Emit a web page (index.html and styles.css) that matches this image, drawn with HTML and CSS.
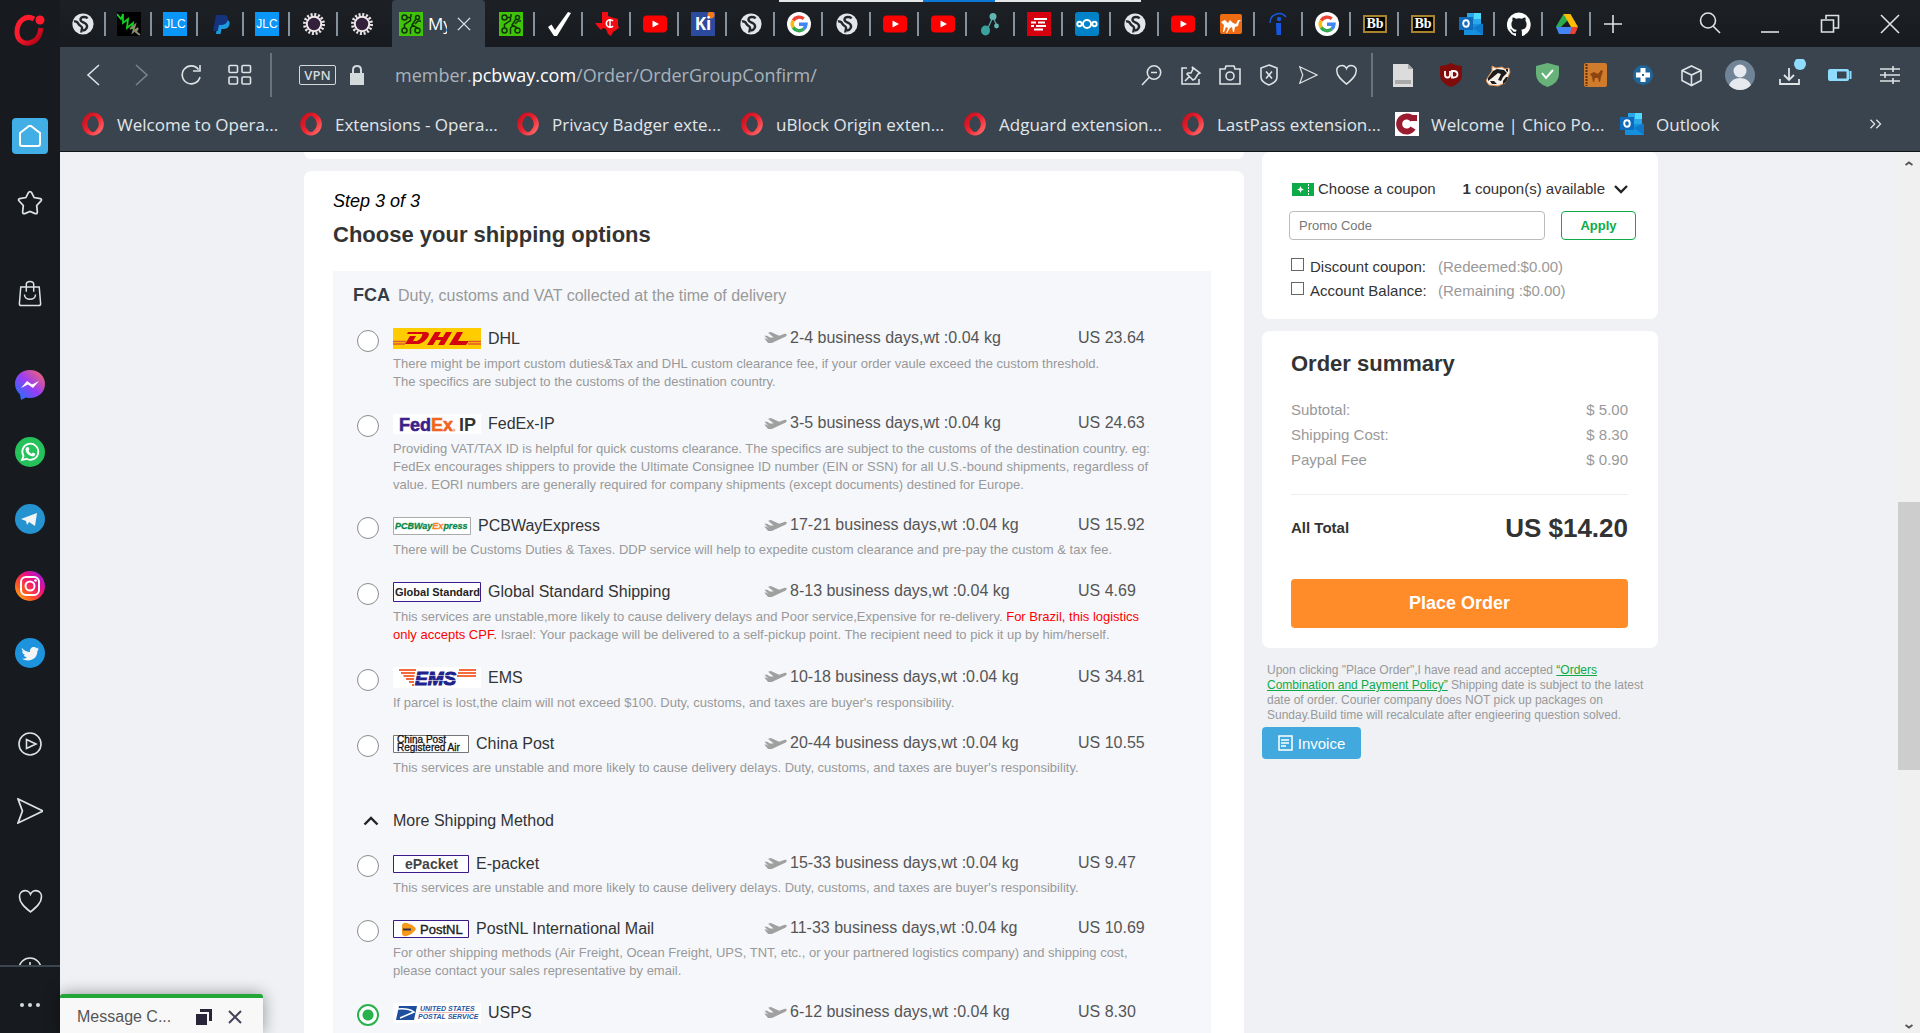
FILE: index.html
```html
<!DOCTYPE html>
<html lang="en">
<head>
<meta charset="utf-8">
<title>My Order</title>
<link rel="stylesheet" href="styles.css">
</head>
<body>
<svg class="sprite" width="0" height="0" aria-hidden="true">
  <defs>
    <linearGradient id="red-ring" x1="0" y1="0" x2="1" y2="1"><stop offset="0" stop-color="#c4101f"/><stop offset=".5" stop-color="#f0222f"/><stop offset="1" stop-color="#ff6a6a"/></linearGradient>
    <linearGradient id="logo-red" x1="0" y1="0" x2="1" y2="1"><stop offset=".4" stop-color="#ff1b2d"/><stop offset="1" stop-color="#a70014"/></linearGradient>
    <linearGradient id="msg-grad" x1="0" y1="1" x2="1" y2="0"><stop offset="0" stop-color="#0a7cff"/><stop offset=".5" stop-color="#9a3cf5"/><stop offset="1" stop-color="#ff6a5c"/></linearGradient>
    <linearGradient id="ig-grad" x1="0" y1="1" x2="1" y2="0"><stop offset="0" stop-color="#ffd21c"/><stop offset=".3" stop-color="#ff5a1f"/><stop offset=".6" stop-color="#f0127a"/><stop offset="1" stop-color="#8a1cff"/></linearGradient>
  </defs>
  <symbol id="globe" viewBox="0 0 24 24"><circle cx="12" cy="12" r="10.600" fill="#e3e6e8"/><path d="M16.500 6.500c-1-2-6.500-2.300-7 .8-.5 3 3.500 2.700 5.500 4.700 2.300 2.500.5 6-3 6.500M3 9.500c2-.5 3.500.5 4.500 2.500s3 1.500 3.500 3.500-1 3-.5 5" fill="none" stroke="#23272b" stroke-width="2.400"/></symbol>
  <symbol id="spice" viewBox="0 0 24 24"><path d="M0 0h24v24H0z"/><path d="M0 2l4 5 2-5 0 9 5-4-1 9 6-5-1 6" fill="none" stroke="#12d01f" stroke-width="1.800"/><path d="M13 17l5-4-2 7 5-4-2 4 4 3" fill="none" stroke="#8d8a72" stroke-width="1.800"/></symbol>
  <symbol id="paypal" viewBox="0 0 24 24"><path fill="#1c9ade" d="M9 8h8c3 0 4 2 3.500 4.500-.6 3-3 4.500-6 4.500h-2l-1 5H7z"/><path fill="#15337c" d="M7 3h7c4 0 5.500 2 4.800 5-.8 3.500-3.300 5-6.800 5h-2l-1.300 6H4z"/></symbol>
  <symbol id="gear" viewBox="0 0 24 24"><circle cx="12" cy="12" r="9.500" fill="none" stroke="#e9e3e6" stroke-width="3" stroke-dasharray="2 1.730"/><circle cx="12" cy="12" r="7.200" fill="#35203c" stroke="#efe9ec" stroke-width="2"/></symbol>
  <symbol id="pcb" viewBox="0 0 24 24"><path fill="#3fc40a" d="M0 0h24v24H0z"/><g fill="none" stroke="#12330a" stroke-width="1.500"><circle cx="5.500" cy="5.500" r="2.500"/><circle cx="5.500" cy="18.500" r="2.500"/><circle cx="18.500" cy="18.500" r="2.500"/><circle cx="18.500" cy="5.500" r="2"/><path d="M8 5.500h3.500l0 3-6 4v3.500M12 2v3M17 7l-4 6 5.500 3M11.500 22v-6l3-3M22 9h-3l-3 3"/></g></symbol>
  <symbol id="check" viewBox="0 0 24 24"><path fill="#fff" d="M1 15l3.500-2.500 3.500 5.500L21 0l3 1L10 24H7z"/></symbol>
  <symbol id="texas" viewBox="0 0 24 24"><path fill="#f30d12" d="M7 0h6v4l6 2 4 1v6l1 3-6 4-2 4-3-2-2-5-3-1-2 2-3-3-3-4h7z"/><path d="M18 9a3.800 3.800 0 1 0 0 5M15 7v9" fill="none" stroke="#fff" stroke-width="1.600"/></symbol>
  <symbol id="yt" viewBox="0 0 24 24"><rect y="3.500" width="24" height="17" rx="4" fill="#f00"/><path fill="#fff" d="M9.500 8.500v7l6.500-3.500z"/></symbol>
  <symbol id="google" viewBox="0 0 24 24"><circle cx="12" cy="12" r="12" fill="#fff"/><g fill="none" stroke-width="3.400"><path d="M6.200 8.500A7 7 0 0 1 16.700 6.800" stroke="#ea4335"/><path d="M6.200 8.500a7 7 0 0 0 0 7" stroke="#fbbc05"/><path d="M6.200 15.500a7 7 0 0 0 10.500 1.500" stroke="#34a853"/><path d="M12 12.200h7a7 7 0 0 1-2.300 4.800" stroke="#4285f4"/></g></symbol>
  <symbol id="nodes" viewBox="0 0 24 24"><g stroke="#5aa3a5" stroke-width="1.300"><path d="M14 5L8 18M14 5l4 9"/></g><circle cx="14" cy="4.500" r="3.500" fill="#62b5b3"/><ellipse cx="6.500" cy="18.500" rx="4.500" ry="5" fill="#3aa19e"/><circle cx="17.500" cy="14" r="2.400" fill="#62b5b3"/></symbol>
  <symbol id="lines" viewBox="0 0 24 24"><path fill="#d4000f" d="M0 0h24v24H0z"/><path d="M7 7h13M4 10.500h5m2 0h7M9 14h10M4 14h3M7 17.500h9" stroke="#fff" stroke-width="1.900"/></symbol>
  <symbol id="cloud" viewBox="0 0 24 24"><rect width="24" height="24" rx="3" fill="#0082c9"/><g fill="none" stroke="#fff" stroke-width="1.900"><circle cx="12" cy="12" r="4"/><circle cx="4.500" cy="12" r="2.200"/><circle cx="19.500" cy="12" r="2.200"/></g></symbol>
  <symbol id="camel" viewBox="0 0 24 24"><rect x="1" y="2" width="22" height="20" rx="2" fill="#ef6c13"/><path fill="#fff" d="M2 10l4-2 3 3 2-3 3 3 3 1 2-4h3l-2 2-1 4-3 1-1 5h-1l-1-5-2 1-3 5H7l2-5-2-1-2 5H4l1-7z"/></symbol>
  <symbol id="info" viewBox="0 0 24 24"><path d="M3 11a9 9 0 0 1 16-6" fill="none" stroke="#1657e0" stroke-width="1.500"/><circle cx="12" cy="7" r="2.200" fill="#1657e0"/><path d="M9 11h5v12H9.500" fill="#1657e0"/></symbol>
  <symbol id="outlook" viewBox="0 0 24 24"><path fill="#28a8ea" d="M8 1h14v12H8z"/><path fill="#50d9ff" d="M15 1h7v6h-7z"/><path fill="#1490df" d="M5 12h19v11H5z"/><path fill="#0a5fb4" d="M14 16l10-5v12z" opacity=".5"/><rect y="5" width="14" height="13" fill="#0f6cbd"/><ellipse cx="7" cy="11.500" rx="2.800" ry="3.300" fill="none" stroke="#fff" stroke-width="1.900"/></symbol>
  <symbol id="github" viewBox="0 0 24 24"><path fill="#fff" d="M12 .6a12 12 0 0 0-3.800 23.400c.6.1.8-.3.8-.6v-2.200c-3.300.7-4-1.500-4-1.500-.6-1.400-1.400-1.800-1.400-1.800-1-.7.1-.7.1-.7 1.200.1 1.900 1.200 1.900 1.200 1 1.900 2.800 1.300 3.500 1 .1-.8.400-1.300.8-1.600-2.700-.3-5.500-1.300-5.500-5.900 0-1.300.5-2.400 1.200-3.200-.1-.4-.5-1.600.1-3.200 0 0 1-.3 3.300 1.200a11.500 11.500 0 0 1 6 0c2.300-1.500 3.300-1.200 3.300-1.200.7 1.600.2 2.800.1 3.200.8.800 1.200 1.900 1.200 3.200 0 4.600-2.800 5.600-5.500 5.900.4.400.8 1.100.8 2.200v3.300c0 .3.200.7.800.6A12 12 0 0 0 12 .6z"/></symbol>
  <symbol id="drive" viewBox="0 0 24 24"><path fill="#2da94f" d="M8.500 2h4v6.500L6 15 4 20l-3-5.500z"/><path fill="#fbbc05" d="M8.500 2h7l7.500 13h-7z"/><path fill="#4385f5" d="M5.500 15h12l-2 7H4l-3-7z"/><path fill="#ea4335" d="M16.500 15H23l-3 7h-5z"/></symbol>
  <symbol id="ring" viewBox="0 0 24 24"><ellipse cx="12" cy="12" rx="8.300" ry="9" fill="none" stroke="url(#red-ring)" stroke-width="5"/><ellipse cx="12" cy="12" rx="4.800" ry="8" fill="#39444f"/></symbol>
  <symbol id="chico" viewBox="0 0 24 24"><path fill="#fff" d="M0 0h24v24H0z"/><path d="M19 9V3M18 8a7.500 7.500 0 1 0 0 8" fill="none" stroke="#9a1b2f" stroke-width="6"/></symbol>
  <symbol id="heart" viewBox="0 0 24 24"><path d="M12 22C6 17 1.500 13 1.500 8A5.500 5.500 0 0 1 12 5 5.500 5.500 0 0 1 22.500 8c0 5-4.500 9-10.500 14z"/></symbol>
  <symbol id="send" viewBox="0 0 24 24"><path d="M1 1l23 11L1 23l4-11z"/></symbol>
  <symbol id="plane" viewBox="0 0 24 14"><path fill="#a0a0a0" d="M0 5l3 0 3 2 4 0L4 2l3-1 9 4 6-2c2 0 3 1 1 3L8 13l-4 0-4-5 2 0 3 2z"/></symbol>
</svg>

<aside class="sidebar">
  <div class="side-list">
    <button class="side-logo" aria-label="Menu"><svg width="32" height="32" viewBox="0 0 32 32"><path d="M20 5C11 0 3 8 3 18c0 8 6 12 12 11 7-1 11-7 12-15" fill="none" stroke="url(#logo-red)" stroke-width="5"/><circle cx="26" cy="6" r="4.500" fill="#ff1b2d"/></svg></button>
    <div class="side-group">
      <button aria-label="Home"><span class="home"><svg class="line" width="24" height="24" viewBox="0 0 24 24"><path d="M2 9l9-7h2l9 7v11q0 2-2 2H4q-2 0-2-2z"/></svg></span></button>
      <button aria-label="Bookmarks"><svg class="line" width="26" height="26" viewBox="0 0 24 24"><path d="M12 1.500q1 0 1.500 1l2.300 4.500 5.700 1q1.800.5.700 2l-4 4.300.6 6q0 2-2 1.500L12 19.800 7.200 21.800q-2 .5-2-1.500l.6-6-4-4.300q-1-1.500.7-2l5.700-1 2.300-4.500q.5-1 1.500-1z"/></svg></button>
    </div>
    <div class="side-group">
      <button aria-label="Shopping"><svg class="line" width="24" height="27" viewBox="0 0 26 28"><path d="M3 7h20l1.500 18q0 2-2 2h-19q-2 0-2-2zM9 12V4q0-3 4-3t4 3v8M7 15c0 7 12 7 12 0"/></svg></button>
    </div>
    <div class="side-group">
      <button aria-label="Messenger"><svg width="30" height="30" viewBox="0 0 30 30"><path fill="url(#msg-grad)" d="M15 0C6.500 0 0 6 0 14c0 4 2 8 5 10.500l1 5.500 5-2.500C20 30 30 24 30 14 30 6 23.500 0 15 0z"/><path fill="#fff" d="M6 18l6-7 5 3.500 7-3.500-6 7-5-3.500z"/></svg></button>
      <button aria-label="WhatsApp"><svg width="30" height="30" viewBox="0 0 30 30"><circle cx="15" cy="15" r="15" fill="#25c15b"/><path d="M7 23l1.500-4a8 8 0 1 1 3 2.800z" fill="none" stroke="#fff" stroke-width="1.800"/><path fill="#fff" d="M12 10l1.500 0 1 2.500-1 1.200q1 2 3 3l1.300-1.200 2.500 1.300c0 2-2 3-3.500 2.500-3.500-1-6-3.800-6.300-6.500q0-2 1.500-2.800z"/></svg></button>
      <button aria-label="Telegram"><svg width="30" height="30" viewBox="0 0 30 30"><circle cx="15" cy="15" r="15" fill="#2593cf"/><path fill="#f2f4f5" d="M6 15l16-6-2 13-6-4-2 3-1-4z"/></svg></button>
      <button aria-label="Instagram"><svg width="30" height="30" viewBox="0 0 30 30"><circle cx="15" cy="15" r="15" fill="url(#ig-grad)"/><g fill="none" stroke="#fff" stroke-width="2"><rect x="6" y="6" width="18" height="18" rx="5"/><circle cx="15" cy="15" r="4.500"/></g><circle cx="20.500" cy="9.500" r="1.300" fill="#fff"/></svg></button>
      <button aria-label="Twitter"><svg width="30" height="30" viewBox="0 0 30 30"><circle cx="15" cy="15" r="15" fill="#1d93dd"/><path fill="#f2f4f5" d="M7 10c2 2.500 5 4 8 4-.5-3 1.500-5 4-5q1.500 0 2.700 1.200l2-.8-1.200 2 1.500-.2-1.600 1.800C22.400 19 18 22.500 13 22.500q-3.500 0-6-1.700 3 .2 5-1.300-2.500-.3-3.200-2.500h1.400C8 16.200 7.200 15 7.200 13l1.500.4C7 12 6.500 11.500 7 10z"/></svg></button>
    </div>
    <div class="side-group">
      <button aria-label="Player"><svg class="line" width="24" height="24" viewBox="0 0 24 24"><circle cx="12" cy="12" r="11"/><path d="M8.500 7.500l9.500 4.500-9.500 4.500z"/></svg></button>
      <button aria-label="Flow"><svg class="line" width="26" height="26"><use href="#send"/></svg></button>
    </div>
    <div class="side-group">
      <button aria-label="Favourites"><svg class="line" width="25" height="25"><use href="#heart"/></svg></button>
      <button aria-label="History"><svg class="line" width="24" height="24" viewBox="0 0 24 24"><circle cx="12" cy="12" r="11"/><path d="M12 5v8h5"/></svg></button>
    </div>
  </div>
  <button class="side-more" aria-label="More"><svg width="20" height="4" viewBox="0 0 20 4" fill="#d6dbdf"><circle cx="2" cy="2" r="2"/><circle cx="10" cy="2" r="2"/><circle cx="18" cy="2" r="2"/></svg></button>
</aside>

<div class="window">
  <header class="chrome">
    <div class="overlay-bar"><i></i></div>
    <div class="tabs">
      <button class="tab early"><svg><use href="#globe"/></svg></button>
      <button class="tab early"><svg><use href="#spice"/></svg></button>
      <button class="tab early"><span class="fav jlc">JLC</span></button>
      <button class="tab early"><svg><use href="#paypal"/></svg></button>
      <button class="tab early"><span class="fav jlc">JLC</span></button>
      <button class="tab"><svg><use href="#gear"/></svg></button>
      <button class="tab bare"><svg><use href="#gear"/></svg></button>
      <button class="tab-active"><svg><use href="#pcb"/></svg><span>My</span><svg class="close line" viewBox="0 0 16 16"><path d="M1 1l14 14M15 1L1 15"/></svg></button>
      <button class="tab"><svg><use href="#pcb"/></svg></button>
      <button class="tab"><svg><use href="#check"/></svg></button>
      <button class="tab"><svg><use href="#texas"/></svg></button>
      <button class="tab"><svg><use href="#yt"/></svg></button>
      <button class="tab"><span class="fav ki">Ki</span></button>
      <button class="tab"><svg><use href="#globe"/></svg></button>
      <button class="tab"><svg><use href="#google"/></svg></button>
      <button class="tab"><svg><use href="#globe"/></svg></button>
      <button class="tab"><svg><use href="#yt"/></svg></button>
      <button class="tab"><svg><use href="#yt"/></svg></button>
      <button class="tab"><svg><use href="#nodes"/></svg></button>
      <button class="tab"><svg><use href="#lines"/></svg></button>
      <button class="tab"><svg><use href="#cloud"/></svg></button>
      <button class="tab"><svg><use href="#globe"/></svg></button>
      <button class="tab"><svg><use href="#yt"/></svg></button>
      <button class="tab"><svg><use href="#camel"/></svg></button>
      <button class="tab"><svg><use href="#info"/></svg></button>
      <button class="tab"><svg><use href="#google"/></svg></button>
      <button class="tab"><span class="fav bb">Bb</span></button>
      <button class="tab"><span class="fav bb">Bb</span></button>
      <button class="tab"><svg><use href="#outlook"/></svg></button>
      <button class="tab"><svg><use href="#github"/></svg></button>
      <button class="tab"><svg><use href="#drive"/></svg></button>
      <button class="tab bare" aria-label="New tab"><svg class="line" viewBox="0 0 24 24"><path d="M10 3v18M1 12h18"/></svg></button>
      <div class="win-controls">
        <button aria-label="Search tabs"><svg class="line" width="24" height="24" viewBox="0 0 24 24"><circle cx="10" cy="8.500" r="7.500"/><path d="M15 14l7 7"/></svg></button>
        <button aria-label="Minimise"><svg class="line" width="20" height="24" viewBox="0 0 20 24"><path d="M1 20h18"/></svg></button>
        <button aria-label="Restore"><svg class="line" width="20" height="20" viewBox="0 0 20 20"><path d="M1.500 6h12v12h-12zM6 5V1.500h12.500V14H14"/></svg></button>
        <button aria-label="Close"><svg class="line" width="20" height="20" viewBox="0 0 20 20"><path d="M1 1l18 18M19 1L1 19"/></svg></button>
      </div>
    </div>

    <div class="toolbar">
      <nav class="nav-buttons">
        <button aria-label="Back"><svg class="line" width="14" height="24" viewBox="0 0 14 24"><path d="M13 2L2 12l11 10"/></svg></button>
        <button aria-label="Forward" class="dim"><svg class="line" width="14" height="24" viewBox="0 0 14 24"><path d="M1 2l11 10L1 22"/></svg></button>
        <button aria-label="Reload"><svg class="line" width="22" height="22" viewBox="0 0 22 22"><path d="M18.500 5.500A9 9 0 1 0 20 13M20 1v6h-7"/></svg></button>
        <button aria-label="Tabs"><svg class="line" width="24" height="22" viewBox="0 0 24 22"><rect x="1" y="1.500" width="8.500" height="7" rx="1"/><rect x="14" y="1.500" width="8.500" height="7" rx="1"/><rect x="1" y="13" width="8.500" height="7" rx="1"/><rect x="14" y="13" width="8.500" height="7" rx="1"/></svg></button>
      </nav>
      <div class="address">
        <button class="vpn">VPN</button>
        <svg width="14" height="20" viewBox="0 0 14 20"><path fill="#d4d9dc" d="M0 8h14v12H0z"/><path d="M3 9V5q0-4 4-4t4 4v4" fill="none" stroke="#d4d9dc" stroke-width="2"/></svg>
        <span class="url">member.<b>pcbway.com</b>/Order/OrderGroupConfirm/</span>
      </div>
      <div class="page-tools">
        <button aria-label="Zoom"><svg class="line" width="21" height="21" viewBox="0 0 21 21"><circle cx="13" cy="7.500" r="6.700"/><path d="M8 12.500L1 20M10 7.500h6"/></svg></button>
        <button aria-label="Pin"><svg class="line" width="20" height="20" viewBox="0 0 20 20"><path d="M6 3H1v16h17v-5M11 2l8 6-2 1-3 5-2 1-6-6 1-1h3l2-4zM9 11l-5 5"/></svg></button>
        <button aria-label="Snapshot"><svg class="line" width="22" height="20" viewBox="0 0 22 20"><path d="M1 4h5l1-3h8l1 3h5v15H1z"/><circle cx="11" cy="11" r="4"/></svg></button>
        <button aria-label="Blocker"><svg class="line" width="20" height="22" viewBox="0 0 20 22"><path d="M10 1l8 3v9q0 5-8 8-8-3-8-8V4zM7 7.500l6 7M13 7.500l-6 7"/></svg></button>
        <button aria-label="Send"><svg class="line" width="20" height="18"><use href="#send"/></svg></button>
        <button aria-label="Favourite"><svg class="line" width="23" height="22"><use href="#heart"/></svg></button>
      </div>
      <div class="extensions">
        <button aria-label="Notes"><svg width="20" height="24" viewBox="0 0 20 24"><path fill="#dcdcdc" d="M0 1h15l5 5v18H0z"/><path fill="#aaa" d="M2 17h16v4H2zM15 1v5h5z"/></svg></button>
        <button aria-label="uBlock"><svg width="22" height="24" viewBox="0 0 22 24"><path fill="#800b0b" d="M11 0q5 3 11 3v9q0 8-11 12Q0 20 0 12V3q6 0 11-3z"/><path d="M5 8v4q0 2.500 2.500 2.500T10 12V8M12 8v6.500h1.500q4 0 4-3.200T13.500 8z" fill="none" stroke="#fff" stroke-width="1.800"/></svg></button>
        <button aria-label="Badger"><svg width="26" height="24" viewBox="0 0 26 24"><path fill="#f7f1ea" stroke="#e08a45" d="M2 14l4-6 0-5 4 2 6-1 3 2 4-1 1 4-2 5-3 6-7 3-9-1-3-4z"/><path fill="#1c1c1c" d="M7 8l4-2 7 1 3 3-4 4-2 4-3-1 3-6-3-1-6 5-4 3 0-3zM17 18l3-4 2 0-2 5-3 2zM4 18l4 0 3 3-5 0zM20 6l2 0 0 3-2-1z"/></svg></button>
        <button aria-label="Adguard"><svg width="23" height="24" viewBox="0 0 23 24"><path fill="#67b279" d="M11.500 0L23 3v8q0 9-11.500 13Q0 20 0 11V3z"/><path d="M6 10l4 5 7-8" fill="none" stroke="#fff" stroke-width="2"/></svg></button>
        <button aria-label="Price history"><svg width="23" height="24" viewBox="0 0 23 24"><rect width="23" height="24" rx="2" fill="#d07c2c"/><path d="M2.500 1v22" stroke="#5c3010" stroke-width="2" stroke-dasharray="2 1"/><path fill="#8c4410" d="M6 11l4-2 4 2 3-4 2 1-2 6-1 5h-1l-1-4-3 0-1 4H9l-1-5z"/></svg></button>
        <button aria-label="Health"><svg width="20" height="20" viewBox="0 0 20 20"><circle cx="10" cy="10" r="10" fill="#20659a"/><path fill="#fff" d="M7.500 3h5v4.500H17v5h-4.500V17h-5v-4.500H3v-5h4.500z"/><path fill="#20659a" d="M9 9h2v2H9z"/></svg></button>
        <button aria-label="Extensions"><svg class="line" width="21" height="21" viewBox="0 0 21 21"><path d="M10.500 1L20 5.500v10l-9.500 5-9.500-5v-10zM1 5.500l9.500 4.500L20 5.500M10.500 10v10"/></svg></button>
      </div>
      <div class="account">
        <button aria-label="Profile"><svg width="30" height="30" viewBox="0 0 30 30"><circle cx="15" cy="15" r="15" fill="#718397"/><circle cx="15" cy="11" r="6.500" fill="#e6eaee"/><path fill="#e6eaee" d="M4 25q3-7 11-7t11 7q-4 5-11 5T4 25z"/></svg></button>
        <button aria-label="Downloads"><svg width="32" height="32" viewBox="0 0 32 32"><path d="M15 9v12M10 16l5 5 5-5M6 20v5h19v-5" fill="none" stroke="#e0e4e7" stroke-width="1.800"/><circle cx="26" cy="5" r="6" fill="#8fdcff"/></svg></button>
        <button aria-label="Battery"><svg width="24" height="12" viewBox="0 0 24 12"><rect width="21" height="12" rx="2" fill="#8fdcff"/><path fill="#39444f" d="M9 2.500h9.500v7H9z"/><path d="M22.500 2v8" stroke="#8fdcff" stroke-width="2"/></svg></button>
        <button aria-label="Easy setup"><svg class="line" width="20" height="18" viewBox="0 0 20 18"><path d="M0 3h20M0 9h20M0 15h20M13 0v6M5 6v6M13 12v6"/></svg></button>
      </div>
    </div>

    <nav class="bookmarks">
      <a href="#"><svg><use href="#ring"/></svg>Welcome to Opera...</a>
      <a href="#"><svg><use href="#ring"/></svg>Extensions - Opera...</a>
      <a href="#"><svg><use href="#ring"/></svg>Privacy Badger exte...</a>
      <a href="#"><svg><use href="#ring"/></svg>uBlock Origin exten...</a>
      <a href="#"><svg><use href="#ring"/></svg>Adguard extension...</a>
      <a href="#"><svg><use href="#ring"/></svg>LastPass extension...</a>
      <a href="#"><svg><use href="#chico"/></svg>Welcome | Chico Po...</a>
      <a href="#"><svg><use href="#outlook"/></svg>Outlook</a>
      <button aria-label="More bookmarks"><svg class="line" width="13" height="10" viewBox="0 0 14 12"><path d="M1 1l5 5-5 5M8 1l5 5-5 5"/></svg></button>
    </nav>
  </header>

  <div class="viewport">
    <main class="page">
      <div class="columns">
        <div class="left">
          <section class="card previous"></section>
          <section class="card shipping">
            <p class="step">Step 3 of 3</p>
            <h1>Choose your shipping options</h1>
            <div class="panel">
              <p class="terms"><strong>FCA</strong>Duty, customs and VAT collected at the time of delivery</p>

              <div class="option">
                <input type="radio" name="ship" id="dhl">
                <div class="head">
                  <label for="dhl"><svg width="88" height="21" viewBox="0 0 88 21"><path fill="#fc0" d="M0 0h88v21H0z"/><path d="M0 13.500h13M0 16h12M76 13.500h12M75 16h13" stroke="#e4572e" stroke-width="1.500"/><g fill="#d40511"><path d="M15 4h17q6 0 3 5t-9 7H12l5-8h6l-3 5h4q4-2 5-5t-1-2H14zM42 4h6l-3 5h5l3-5h6l-8 13h-6l3-5h-5l-3 5h-6zM64 4h6l-5 9h11l-3 4H56z"/></g></svg>DHL</label>
                  <span class="time"><svg><use href="#plane"/></svg>2-4 business days,wt :0.04 kg</span><span class="price">US 23.64</span>
                </div>
                <p>There might be import custom duties&amp;Tax and DHL custom clearance fee, if your order vaule exceed the custom threshold.<br>The specifics are subject to the customs of the destination country.</p>
              </div>

              <div class="option">
                <input type="radio" name="ship" id="fedex">
                <div class="head">
                  <label for="fedex"><svg width="88" height="20" viewBox="0 0 88 20"><path fill="#fff" d="M0 0h88v20H0z"/><g font-family="Liberation Sans" font-weight="700" font-size="18"><text x="6" y="17" fill="#3d1f8c" stroke="#3d1f8c" stroke-width=".6">Fed<tspan fill="#f0641e" stroke="#f0641e">Ex</tspan></text></g><circle cx="61" cy="16" r="1.500" fill="#f7b48e"/><text x="66" y="17" font-family="Liberation Sans" font-weight="700" font-size="18" fill="#333">IP</text></svg>FedEx-IP</label>
                  <span class="time"><svg><use href="#plane"/></svg>3-5 business days,wt :0.04 kg</span><span class="price">US 24.63</span>
                </div>
                <p>Providing VAT/TAX ID is helpful for quick customs clearance. The specifics are subject to the customs of the destination country. eg:<br>FedEx encourages shippers to provide the Ultimate Consignee ID number (EIN or SSN) for all U.S.-bound shipments, regardless of<br>value. EORI numbers are generally required for company shipments (except documents) destined for Europe.</p>
              </div>

              <div class="option">
                <input type="radio" name="ship" id="pcbx">
                <div class="head">
                  <label for="pcbx"><svg width="78" height="18" viewBox="0 0 78 18"><path fill="#fff" stroke="#aaa" d="M.5.5h77v17H.5z"/><text x="2" y="12" font-family="Liberation Sans" font-weight="700" font-style="italic" font-size="9" fill="#0a8748" stroke="#0a8748" stroke-width=".3">PCBWay<tspan fill="#f5821f" stroke="#f5821f">Ex</tspan>press</text></svg>PCBWayExpress</label>
                  <span class="time"><svg><use href="#plane"/></svg>17-21 business days,wt :0.04 kg</span><span class="price">US 15.92</span>
                </div>
                <p>There will be Customs Duties &amp; Taxes. DDP service will help to expedite custom clearance and pre-pay the custom &amp; tax fee.</p>
              </div>

              <div class="option">
                <input type="radio" name="ship" id="gss">
                <div class="head">
                  <label for="gss"><svg width="88" height="20" viewBox="0 0 88 20"><path fill="#fff" stroke="#3b1a8a" d="M.5.5h87v19H.5z"/><text x="2" y="14" font-family="Liberation Sans" font-weight="700" font-size="11" fill="#222">Global Standard</text></svg>Global Standard Shipping</label>
                  <span class="time"><svg><use href="#plane"/></svg>8-13 business days,wt :0.04 kg</span><span class="price">US 4.69</span>
                </div>
                <p>This services are unstable,more likely to cause delivery delays and Poor service,Expensive for re-delivery. <em>For Brazil, this logistics<br>only accepts CPF.</em> Israel: Your package will be delivered to a self-pickup point. The recipient need to pick it up by him/herself.</p>
              </div>

              <div class="option">
                <input type="radio" name="ship" id="ems">
                <div class="head">
                  <label for="ems"><svg width="88" height="21" viewBox="0 0 88 21"><path fill="#fff" d="M0 0h88v21H0z"/><g stroke="#f26a3d" stroke-width="2"><path d="M6 3h17M8 6h14M10.500 9h11M13 12h8M16 15h5M19 18h2M66 3h17M65 6h18M64 9h19"/></g><text x="22" y="18" font-family="Liberation Sans" font-weight="700" font-style="italic" font-size="19" fill="#22228c" stroke="#22228c">EMS</text><path d="M22 8.500h42M21 13.500h42" stroke="#fff" stroke-width=".6"/></svg>EMS</label>
                  <span class="time"><svg><use href="#plane"/></svg>10-18 business days,wt :0.04 kg</span><span class="price">US 34.81</span>
                </div>
                <p>If parcel is lost,the claim will not exceed $100. Duty, customs, and taxes are buyer's responsibility.</p>
              </div>

              <div class="option">
                <input type="radio" name="ship" id="cpost">
                <div class="head">
                  <label for="cpost"><svg width="76" height="18" viewBox="0 0 76 18"><path fill="#fff" stroke="#777" d="M.5.5h75v17H.5z"/><g font-family="Liberation Sans" font-size="10" fill="#111" stroke="#111" stroke-width=".3"><text x="4" y="8">China Post</text><text x="4" y="16">Registered Air</text></g></svg>China Post</label>
                  <span class="time"><svg><use href="#plane"/></svg>20-44 business days,wt :0.04 kg</span><span class="price">US 10.55</span>
                </div>
                <p>This services are unstable and more likely to cause delivery delays. Duty, customs, and taxes are buyer's responsibility.</p>
              </div>

              <button class="more"><svg width="16" height="10" viewBox="0 0 16 10"><path d="M1.500 8.500L8 2l6.500 6.500" fill="none" stroke="#222" stroke-width="2.400"/></svg>More Shipping Method</button>

              <div class="option">
                <input type="radio" name="ship" id="epacket">
                <div class="head">
                  <label for="epacket"><svg width="76" height="18" viewBox="0 0 76 18"><path fill="#fff" stroke="#3b1a8a" d="M.5.5h75v17H.5z"/><text x="12" y="14" font-family="Liberation Sans" font-weight="700" font-size="14" fill="#444">ePacket</text></svg>E-packet</label>
                  <span class="time"><svg><use href="#plane"/></svg>15-33 business days,wt :0.04 kg</span><span class="price">US 9.47</span>
                </div>
                <p>This services are unstable and more likely to cause delivery delays. Duty, customs, and taxes are buyer's responsibility.</p>
              </div>

              <div class="option">
                <input type="radio" name="ship" id="postnl">
                <div class="head">
                  <label for="postnl"><svg width="76" height="18" viewBox="0 0 76 18"><path fill="#fff" stroke="#3b1a8a" d="M.5.5h75v17H.5z"/><path fill="#f79a1c" d="M9 5q1-3 5-2 7 2 9 6-3 5-9 7-5 1-5-3z"/><path d="M10 9.500h8" stroke="#334" stroke-width="2"/><text x="27" y="14" font-family="Liberation Sans" font-size="13" fill="#222" stroke="#222" stroke-width=".4">PostNL</text></svg>PostNL International Mail</label>
                  <span class="time"><svg><use href="#plane"/></svg>11-33 business days,wt :0.04 kg</span><span class="price">US 10.69</span>
                </div>
                <p>For other shipping methods (Air Freight, Ocean Freight, UPS, TNT, etc., or your partnered logistics company) and shipping cost,<br>please contact your sales representative by email.</p>
              </div>

              <div class="option">
                <input type="radio" name="ship" id="usps" checked>
                <div class="head">
                  <label for="usps"><svg width="88" height="20" viewBox="0 0 88 20"><path fill="#fff" d="M0 0h88v20H0z"/><path fill="#1d4f9e" d="M6 3h18l-3 14H3z"/><path d="M5 6q10-1 16 3L7 15" fill="none" stroke="#fff" stroke-width="1.500"/><path d="M26 9.500h55" stroke="#f3b6b6"/><g font-family="Liberation Sans" font-weight="700" font-style="italic" font-size="7" fill="#2a579f"><text x="27" y="8">UNITED STATES</text><text x="25" y="16">POSTAL SERVICE</text></g></svg>USPS</label>
                  <span class="time"><svg><use href="#plane"/></svg>6-12 business days,wt :0.04 kg</span><span class="price">US 8.30</span>
                </div>
              </div>
            </div>
          </section>
        </div>

        <div class="right">
          <section class="card coupon">
            <div class="coupon-head">
              <svg width="22" height="13" viewBox="0 0 22 13"><path fill="#0dab47" d="M0 0h22v13H0z"/><path d="M16.500 1v12" stroke="#fff" stroke-dasharray="2 1"/><path fill="#fff" d="M8.500 3l1 2.500 2.500 1-2.500 1-1 2.500-1-2.500-2.500-1 2.500-1z"/></svg>
              <span>Choose a coupon</span>
              <button><b>1</b> coupon(s) available<svg width="14" height="9" viewBox="0 0 14 9"><path d="M1 1l6 6 6-6" fill="none" stroke="#222" stroke-width="2.400"/></svg></button>
            </div>
            <div class="promo"><input type="text" placeholder="Promo Code" aria-label="Promo Code"><button>Apply</button></div>
            <div class="check-row"><input type="checkbox" id="disc"><label for="disc">Discount coupon:</label><span>(Redeemed:$0.00)</span></div>
            <div class="check-row"><input type="checkbox" id="bal"><label for="bal">Account Balance:</label><span>(Remaining :$0.00)</span></div>
          </section>
          <section class="card summary">
            <h2>Order summary</h2>
            <dl>
              <div><dt>Subtotal:</dt><dd>$ 5.00</dd></div>
              <div><dt>Shipping Cost:</dt><dd>$ 8.30</dd></div>
              <div><dt>Paypal Fee</dt><dd>$ 0.90</dd></div>
            </dl>
            <div class="total"><span>All Total</span><strong>US $14.20</strong></div>
            <button class="place">Place Order</button>
          </section>
          <p class="notice">Upon clicking "Place Order",I have read and accepted <a href="#">“Orders<br>Combination and Payment Policy”</a> Shipping date is subject to the latest<br>date of order. Courier company does NOT pick up packages on<br>Sunday.Build time will recalculate after engieering question solved.</p>
          <button class="invoice"><svg width="15" height="16" viewBox="0 0 15 16"><path d="M1 1h13v14H1zM3 5h8M3 8h8M3 11h5" fill="none" stroke="#fff" stroke-width="1.500"/></svg>Invoice</button>
        </div>
      </div>
    </main>
    <div class="scrollbar">
      <svg width="8" height="5" viewBox="0 0 8 5"><path d="M.5 4L4 1.500 7.500 4" /></svg>
      <i class="before"></i><i class="thumb"></i><i class="after"></i>
      <svg width="8" height="5" viewBox="0 0 8 5"><path d="M.5 1L4 3.500 7.500 1" /></svg>
    </div>
    <div class="chat">
      <span>Message C...</span>
      <button aria-label="Open"><svg width="16" height="16" viewBox="0 0 16 16"><path fill="#282538" d="M4 0h12v12h-3V3H4zM0 5h11v11H0z"/></svg></button>
      <button aria-label="Close"><svg width="14" height="14" viewBox="0 0 14 14"><path d="M1 1l12 12M13 1L1 13" stroke="#45425a" stroke-width="2"/></svg></button>
    </div>
  </div>
</div>
</body>
</html>
```
FILE: styles.css
```css
* { box-sizing: border-box; }
body {
  margin: 0;
  height: 100vh;
  display: flex;
  overflow: hidden;
  font-family: "Liberation Sans", Arial, sans-serif;
  color: #333;
  background: #171a1e;
}
button { margin: 0; padding: 0; border: 0; background: none; font: inherit; color: inherit; cursor: pointer; }
p, h1, h2, dl, dd { margin: 0; }
svg { display: block; flex: none; }
.sprite { position: absolute; }
.line { fill: none; stroke: #dde2e5; stroke-width: 1.6; overflow: visible; }

/* browser side bar */
.sidebar { flex: none; width: 60px; display: flex; flex-direction: column; background: #171a1e; }
.side-list { flex: 1; min-height: 0; overflow: hidden; display: flex; flex-direction: column; gap: 24px; }
.side-logo { flex: none; height: 60px; margin-bottom: 18px; display: grid; place-items: center; }
.side-group { flex: none; }
.side-group button { width: 60px; height: 67px; display: grid; place-items: center; }
.home { width: 36px; height: 36px; border-radius: 4px; background: #42aee6; display: grid; place-items: center; }
.home .line { stroke: #fff; stroke-width: 2; }
.side-more { flex: none; height: 68px; padding-top: 10px; border-top: 2px solid #3b4650; display: grid; place-items: center; }

/* browser frame */
.window { flex: 1; min-width: 0; display: flex; flex-direction: column; }
.chrome { flex: none; position: relative; background: #39444f; border-bottom: 1px solid #10151a; font-family: "Open Sans", "Noto Sans", sans-serif; color: #e2e6e9; }
.chrome button { display: grid; place-items: center; }
.overlay-bar { position: absolute; top: 0; left: 719px; width: 362px; height: 2px; background: #e4e6e8; z-index: 1; }
.overlay-bar i { display: block; width: 72px; height: 2px; margin-left: 144px; background: #0a78d4; }
.tabs { height: 47px; display: flex; align-items: center; background: linear-gradient(#1d2125, #171a1e); }
.chrome .tab { width: 48px; height: 24px; padding-left: 2px; flex: none; border-right: 2px solid #8292a0; }
.chrome .early { width: 46px; }
.chrome .bare { border-color: transparent; }
.tab svg, .bookmarks a svg { width: 24px; height: 24px; }
.fav { display: block; width: 24px; height: 24px; text-align: center; color: #fff; }
.jlc { background: #0a95f8; font: 12px/24px "Liberation Sans", Arial, sans-serif; }
.ki { background: radial-gradient(circle at 20px 3px, #f57a17 3px, transparent 4px), #2c4a9e; font-size: 17px; font-weight: 700; line-height: 24px; }
.bb { height: 18px; border: 2px solid #a8842c; background: #050505; font: 700 14px/14px "Liberation Serif", serif; }
.chrome .tab-active { flex: none; display: flex; align-items: center; gap: 5px; width: 93px; height: 47px; margin: 0 2px 0 6px; padding-left: 7px; border-radius: 4px 4px 0 0; background: #39444f; font-size: 17px; color: #fff; }
.tab-active svg { width: 24px; height: 24px; }
.tab-active span { width: 19px; overflow: hidden; text-align: left; }
.tab-active .close { width: 14px; height: 14px; margin-left: 5px; }
.win-controls { margin-left: auto; display: flex; }
.win-controls button { width: 60px; height: 47px; }

.toolbar { height: 56px; display: flex; align-items: center; padding: 0 5px 0 8px; }
.nav-buttons, .page-tools, .extensions, .account { flex: none; display: flex; }
.nav-buttons { height: 44px; padding-right: 6px; border-right: 2px solid #68737d; }
.nav-buttons button { width: 49px; }
.dim { opacity: .4; }
.address { flex: 1; min-width: 0; display: flex; align-items: center; padding-left: 27px; }
.chrome .vpn { width: 37px; height: 20px; margin-right: 14px; border: 1px solid #d4d9dc; border-radius: 2px; font-size: 13px; font-weight: 600; line-height: 18px; color: #d4d9dc; }
.url { margin-left: 31px; font-size: 18px; color: #a9b3bc; white-space: nowrap; }
.url b { font-weight: 400; color: #fff; }
.page-tools { height: 44px; padding-right: 5px; border-right: 2px solid #68737d; }
.page-tools button { width: 39px; }
.extensions { margin-left: 6px; }
.extensions button { width: 48px; }
.account button { width: 50px; }

.bookmarks { height: 48px; display: grid; grid-template-columns: 218px 217px 224px 223px 218px 214px 225px 1fr 60px; align-items: center; padding: 0 15px 6px 21px; font-size: 17px; }
.bookmarks a { display: flex; align-items: center; gap: 12px; color: inherit; text-decoration: none; white-space: nowrap; }

/* web page */
.viewport { flex: 1; min-height: 0; position: relative; display: flex; background: #eff1f5; }
.page { flex: 1; min-width: 0; overflow: hidden; padding: 0 18px 0 22px; }
.columns { max-width: 1354px; margin: 0 auto; display: flex; align-items: flex-start; gap: 18px; }
.left { flex: 1; min-width: 0; }
.right { flex: none; width: 396px; }
.card { background: #fff; border-radius: 8px; }
.previous { height: 7px; border-radius: 0 0 8px 8px; margin-bottom: 12px; }
.shipping { padding: 19px 33px 30px 29px; }
.step { font-size: 18px; font-style: italic; line-height: 22px; color: #000; }
h1, h2 { font-size: 22px; line-height: 28px; font-weight: 700; color: #333; }
h1 { margin: 9px 0 22px; }
.panel { padding: 14px 26px 24px 24px; background: #f5f7fb; }
.terms { margin: 0 0 22px -4px; font-size: 16px; line-height: 20px; color: #999; }
.terms strong { margin-right: 8px; font-size: 18px; color: #333c47; }
.option { display: grid; grid-template-columns: 22px 1fr; column-gap: 14px; row-gap: 6px; align-items: center; margin-bottom: 23px; }
.option > input { appearance: none; width: 22px; height: 22px; margin: 0 0 -4px; border: 1px solid #8c8c8c; border-radius: 50%; background: #fff; }
.option > input:checked { border: 2px solid #28b24b; background: radial-gradient(circle, #28b24b 5px, #fff 6px); }
.head { display: grid; grid-template-columns: 371fr 314fr 107fr; align-items: center; font-size: 16px; line-height: 18px; white-space: nowrap; }
.head label { display: flex; align-items: center; gap: 7px; color: #333; }
.time { display: flex; align-items: center; gap: 3px; }
.time, .price { padding-bottom: 2px; line-height: 16px; color: #555; }
.time svg { width: 23px; height: 13px; }
.option p { grid-column: 2; font-size: 13px; line-height: 18px; color: #999; white-space: nowrap; }
.option em { font-style: normal; color: #f00; }
.more { display: flex; align-items: center; gap: 14px; margin: 34px 0 24px 6px; font-size: 16px; line-height: 20px; }

.coupon { padding: 28px 18px 19px 27px; font-size: 15px; line-height: 18px; }
.coupon-head { display: flex; align-items: center; gap: 4px; padding-left: 3px; }
.coupon-head button { margin: 0 12px 0 auto; display: flex; align-items: center; gap: 4px; }
.coupon-head button svg { margin-left: 5px; }
.promo { display: flex; gap: 16px; margin: 13px 4px 18px 0; }
.promo input { flex: 1; min-width: 0; height: 29px; padding: 0 9px; border: 1px solid #bbb; border-radius: 4px; font: 13px "Liberation Sans", Arial, sans-serif; }
.promo input::placeholder { color: #777; }
.promo button { width: 75px; height: 29px; border: 1px solid #0dab47; border-radius: 4px; font-size: 13px; font-weight: 700; color: #0dab47; }
.check-row { display: grid; grid-template-columns: 13px 122px 1fr; column-gap: 6px; padding-left: 2px; }
.check-row + .check-row { margin-top: 6px; }
.check-row input { appearance: none; width: 13px; height: 13px; margin: 0; border: 1px solid #666; }
.check-row input:checked { background: #0dab47; }
.check-row label { white-space: nowrap; }
.check-row span { color: #999; }

.summary { margin-top: 12px; padding: 19px 30px 20px 29px; }
.summary dl { margin-top: 19px; padding-bottom: 22px; border-bottom: 1px solid #eee; font-size: 15px; line-height: 25px; color: #999; }
.summary dl div, .total { display: flex; justify-content: space-between; align-items: center; }
.total { margin-top: 17px; line-height: 32px; font-size: 15px; font-weight: 700; }
.total strong { font-size: 26px; }
.place { width: 100%; height: 49px; margin-top: 35px; border-radius: 4px; background: #ff8b29; font-size: 18px; font-weight: 700; color: #fff; }
.notice { padding: 15px 0 4px 5px; font-size: 12px; line-height: 15px; color: #999; white-space: nowrap; }
.notice a { color: #0dab47; }
.invoice { display: flex; align-items: center; justify-content: center; gap: 5px; width: 99px; height: 32px; border-radius: 4px; background: #42a9de; font-size: 15px; color: #fff; }

.scrollbar { flex: none; width: 22px; display: flex; flex-direction: column; align-items: center; padding: 9px 0 4px; background: #f0f0f0; }
.scrollbar path { fill: none; stroke: #555; stroke-width: 2; }
.before { flex: 336; }
.thumb { flex: 268; width: 22px; background: #cdcdcd; }
.after { flex: 254; }

.chat { position: absolute; left: 0; bottom: 0; width: 203px; height: 39px; display: flex; align-items: center; gap: 16px; padding: 2px 21px 0 17px; border-top: 4px solid #22a637; border-radius: 3px 3px 0 0; background: #f8f8f8; box-shadow: 0 0 16px rgba(0, 0, 0, .4); font-size: 16px; color: #555; }
.chat span { flex: 1; white-space: nowrap; }
```
